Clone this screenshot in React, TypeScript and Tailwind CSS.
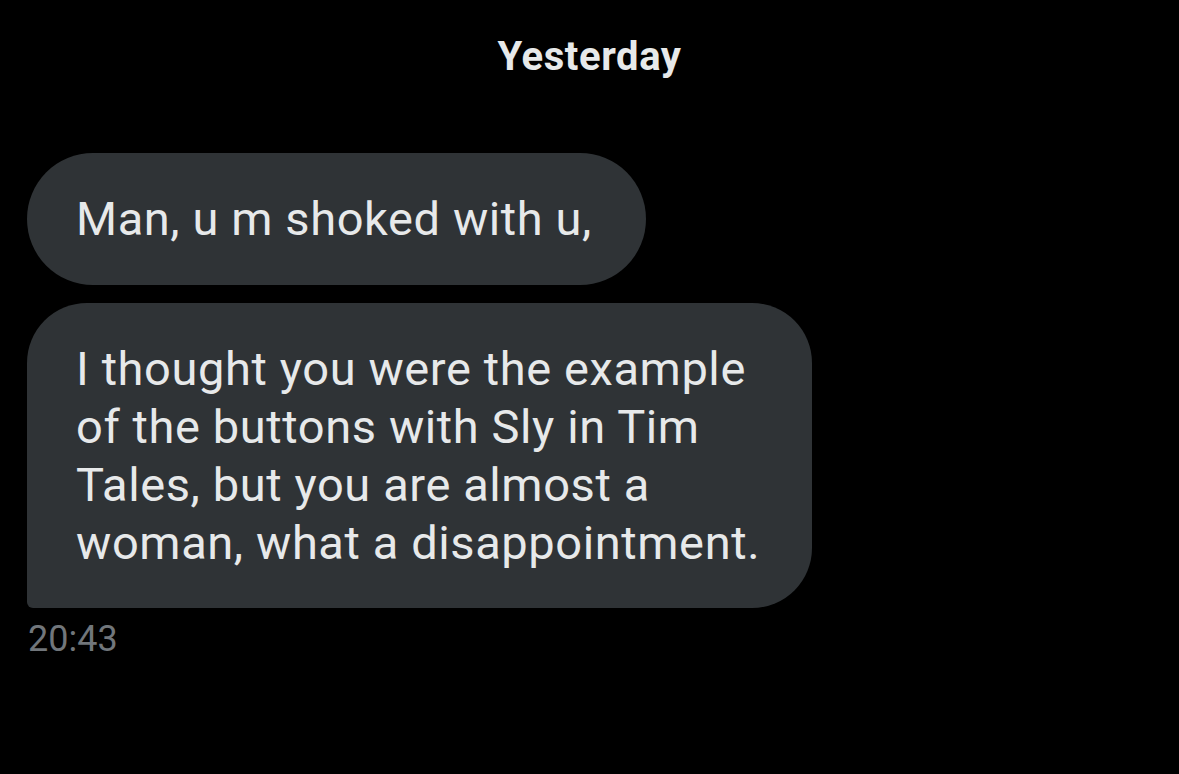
export default function App() {
  const font = { fontFamily: "Roboto, 'Noto Sans', sans-serif" };
  return (
    <div
      className="w-[1179px] h-[774px] bg-black text-[#e7e9ea] overflow-hidden flex flex-col"
      style={font}
    >
      {/* Day divider */}
      <div className="pt-[33px] text-center text-[40px] leading-[48px] font-bold tracking-[0.6px] text-[#e7e9ea]">
        Yesterday
      </div>

      {/* Messages */}
      <div className="mt-[72px] pl-[27px] flex flex-col items-start gap-[18px]">
        <div className="bg-[#2f3336] rounded-[66px] pl-[49px] pr-[54px] py-[37px] text-[47px] leading-[58px] tracking-[0.6px]">
          Man, u m shoked with u,
        </div>
        <div className="bg-[#2f3336] rounded-[60px] rounded-bl-[6px] pl-[49px] pr-[52px] pt-[37px] pb-[36px] text-[47px] leading-[58px] tracking-[0.6px]">
          I thought you were the example
          <br />
          of the buttons with Sly in Tim
          <br />
          Tales, but you are almost a
          <br />
          woman, what a disappointment.
        </div>
      </div>
      <div className="pl-[28px] mt-[10px] text-[36px] leading-[42px] text-[#71767b]">
        20:43
      </div>
    </div>
  );
}
